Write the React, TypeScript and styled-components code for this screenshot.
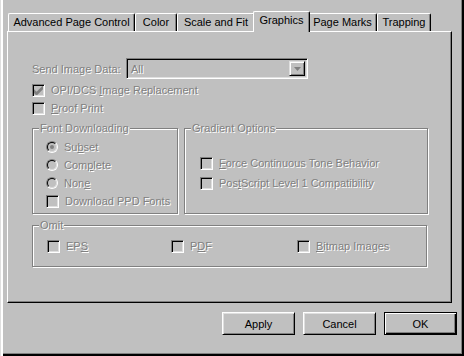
import React from 'react';
import styled, { createGlobalStyle } from 'styled-components';

const GlobalStyle = createGlobalStyle`
  html, body {
    margin: 0;
    padding: 0;
    background: #c0c0c0;
  }
  body {
    font-family: "Liberation Sans", Arial, sans-serif;
    font-size: 11px;
    color: #000;
  }
`;

const Window = styled.div`
  width: 464px;
  height: 356px;
  box-sizing: border-box;
  background: #c0c0c0;
  padding: 11px 0 0 7px;
  display: flex;
  flex-direction: column;
  box-shadow: inset 1px 0 #dfdfdf, inset 3px 0 #fff, inset -2px -2px #000, inset -3px -3px #808080;
`;

const TabStrip = styled.div`
  display: flex;
  align-items: flex-end;
  height: 20px;
  padding-left: 1px;
`;

const Tab = styled.div<{ $w: number; $active?: boolean }>`
  position: relative;
  box-sizing: border-box;
  width: ${(p) => p.$w + (p.$active ? 4 : 0)}px;
  height: ${(p) => (p.$active ? 21 : 18)}px;
  margin: ${(p) => (p.$active ? '0 -2px -1px' : '0')};
  z-index: ${(p) => (p.$active ? 2 : 1)};
  background: #c0c0c0;
  border-top: 1px solid #fff;
  border-left: 1px solid #fff;
  border-right: 1px solid #000;
  border-top-left-radius: 2px;
  border-top-right-radius: 2px;
  box-shadow: inset -1px 0 #808080;
  display: flex;
  justify-content: center;
  padding-top: ${(p) => (p.$active ? 2 : 2)}px;
  white-space: nowrap;
`;

const Panel = styled.div`
  position: relative;
  width: 445px;
  height: 272px;
  box-sizing: border-box;
  border-top: 1px solid #fff;
  border-left: 1px solid #fff;
  border-right: 1px solid #000;
  border-bottom: 1px solid #000;
  box-shadow: inset -1px -1px #808080;
  padding: 26px 0 0 24px;
  display: flex;
  flex-direction: column;
`;

const Dim = styled.span`
  color: #808080;
  text-shadow: 1px 1px 0 #fff;
  white-space: nowrap;
  u {
    text-decoration: underline;
    text-underline-offset: 1px;
  }
`;

const ComboRow = styled.div`
  display: flex;
  align-items: center;
  height: 21px;
`;

const ComboLabel = styled(Dim)`
  width: 94px;
`;

const Combo = styled.div`
  width: 182px;
  height: 21px;
  box-sizing: border-box;
  border-top: 1px solid #808080;
  border-left: 1px solid #808080;
  border-right: 1px solid #fff;
  border-bottom: 1px solid #fff;
  box-shadow: inset 1px 1px #000, inset -1px -1px #dfdfdf;
  display: flex;
  align-items: center;
  justify-content: space-between;
  padding: 0 2px 0 4px;
`;

const DropButton = styled.div`
  width: 16px;
  height: 15px;
  box-sizing: border-box;
  border-top: 1px solid #dfdfdf;
  border-left: 1px solid #dfdfdf;
  border-right: 1px solid #000;
  border-bottom: 1px solid #000;
  box-shadow: inset 1px 1px #fff, inset -1px -1px #808080;
  display: flex;
  align-items: center;
  justify-content: center;
`;

const Row = styled.label<{ $h?: number }>`
  display: flex;
  align-items: center;
  gap: 6px;
  height: ${(p) => p.$h ?? 18}px;
`;

const Box = styled.span`
  position: relative;
  width: 13px;
  height: 13px;
  box-sizing: border-box;
  flex: none;
  border-top: 1px solid #808080;
  border-left: 1px solid #808080;
  border-right: 1px solid #fff;
  border-bottom: 1px solid #fff;
  box-shadow: inset 1px 1px #000, inset -1px -1px #dfdfdf;
  background: #c0c0c0;
  display: flex;
  align-items: center;
  justify-content: center;
`;

const Radio = styled.span`
  position: relative;
  width: 12px;
  height: 12px;
  box-sizing: border-box;
  flex: none;
  border-radius: 50%;
  border: 1px solid;
  border-color: #808080 #fff #fff #808080;
  display: flex;
  align-items: center;
  justify-content: center;

  &::before {
    content: '';
    position: absolute;
    inset: 0;
    border-radius: 50%;
    border: 1px solid;
    border-color: #000 #dfdfdf #dfdfdf #000;
  }
`;

const Dot = styled.span`
  width: 4px;
  height: 4px;
  border-radius: 50%;
  background: #808080;
`;

const Options = styled.div`
  display: flex;
  flex-direction: column;
  margin-top: 2px;
`;

const Groups = styled.div`
  display: flex;
  gap: 6px;
  margin-top: 11px;
`;

const Group = styled.div<{ $w: number; $h: number }>`
  position: relative;
  width: ${(p) => p.$w}px;
  height: ${(p) => p.$h}px;
  box-sizing: border-box;
  border: 1px solid #808080;
  box-shadow: inset 1px 1px #fff, 1px 1px #fff;
`;

const Legend = styled(Dim)`
  position: absolute;
  top: -7px;
  left: 6px;
  padding: 0 1px;
  background: #c0c0c0;
  line-height: 13px;
`;

const GroupBody = styled.div<{ $pt: number; $pl: number; $row?: boolean }>`
  display: flex;
  flex-direction: ${(p) => (p.$row ? 'row' : 'column')};
  padding: ${(p) => p.$pt}px 0 0 ${(p) => p.$pl}px;
`;

const OmitCell = styled.div<{ $w: number }>`
  width: ${(p) => p.$w}px;
`;

const OmitGroup = styled(Group)`
  margin-top: 11px;
`;

const ButtonRow = styled.div`
  display: flex;
  justify-content: flex-end;
  gap: 8px;
  margin-top: 9px;
  padding-right: 7px;
`;

const Button = styled.button<{ $default?: boolean }>`
  width: 73px;
  height: 23px;
  box-sizing: border-box;
  font: inherit;
  color: #000;
  background: #c0c0c0;
  padding: 0;
  border: 1px solid #000;
  border-top-color: ${(p) => (p.$default ? '#000' : '#fff')};
  border-left-color: ${(p) => (p.$default ? '#000' : '#fff')};
  box-shadow: ${(p) =>
    p.$default
      ? 'inset 1px 1px #fff, inset -1px -1px #000, inset -2px -2px #808080'
      : 'inset 1px 1px #dfdfdf, inset -1px -1px #808080'};
  cursor: default;
`;

const Check = () => (
  <svg width="9" height="9" viewBox="0 0 7 7" style={{ marginLeft: 0 }}>
    <path d="M0 2v3l2 2 5-5V-1L2 4z" fill="#808080" transform="translate(0 0.5)" />
  </svg>
);

const CheckRow = ({ label, checked, h }: { label: React.ReactNode; checked?: boolean; h?: number }) => (
  <Row $h={h}>
    <Box>{checked && <Check />}</Box>
    <Dim>{label}</Dim>
  </Row>
);

const RadioRow = ({ label, on }: { label: React.ReactNode; on?: boolean }) => (
  <Row>
    <Radio>{on && <Dot />}</Radio>
    <Dim>{label}</Dim>
  </Row>
);

const tabs = [
  { label: 'Advanced Page Control', w: 127 },
  { label: 'Color', w: 42 },
  { label: 'Scale and Fit', w: 78 },
  { label: 'Graphics', w: 53, active: true },
  { label: 'Page Marks', w: 69 },
  { label: 'Trapping', w: 54 },
];

export default function App() {
  return (
    <>
      <GlobalStyle />
      <Window>
        <TabStrip>
          {tabs.map((t) => (
            <Tab key={t.label} $w={t.w} $active={t.active}>
              {t.label}
            </Tab>
          ))}
        </TabStrip>
        <Panel>
          <ComboRow>
            <ComboLabel>Send Image Data:</ComboLabel>
            <Combo>
              <Dim>All</Dim>
              <DropButton>
                <svg width="7" height="4" viewBox="0 0 7 4">
                  <path d="M0 0h7L3.5 4z" fill="#808080" />
                </svg>
              </DropButton>
            </Combo>
          </ComboRow>
          <Options>
            <CheckRow
              checked
              label={
                <>
                  OPI/DCS <u>I</u>mage Replacement
                </>
              }
            />
            <CheckRow
              label={
                <>
                  <u>P</u>roof Print
                </>
              }
            />
          </Options>
          <Groups>
            <Group $w={146} $h={86}>
              <Legend>Font Downloading</Legend>
              <GroupBody $pt={9} $pl={13}>
                <RadioRow
                  on
                  label={
                    <>
                      Su<u>b</u>set
                    </>
                  }
                />
                <RadioRow
                  label={
                    <>
                      Com<u>p</u>lete
                    </>
                  }
                />
                <RadioRow
                  label={
                    <>
                      Non<u>e</u>
                    </>
                  }
                />
                <CheckRow label="Download PPD Fonts" />
              </GroupBody>
            </Group>
            <Group $w={244} $h={86}>
              <Legend>Gradient Options</Legend>
              <GroupBody $pt={24} $pl={15}>
                <CheckRow
                  h={20}
                  label={
                    <>
                      <u>F</u>orce Continuous Tone Behavior
                    </>
                  }
                />
                <CheckRow
                  h={20}
                  label={
                    <>
                      Pos<u>t</u>Script Level 1 Compatibility
                    </>
                  }
                />
              </GroupBody>
            </Group>
          </Groups>
          <OmitGroup $w={395} $h={42}>
            <Legend>Omit</Legend>
            <GroupBody $pt={11} $pl={14} $row>
              <OmitCell $w={124}>
                <CheckRow
                  label={
                    <>
                      EP<u>S</u>
                    </>
                  }
                />
              </OmitCell>
              <OmitCell $w={126}>
                <CheckRow
                  label={
                    <>
                      P<u>D</u>F
                    </>
                  }
                />
              </OmitCell>
              <OmitCell $w={120}>
                <CheckRow
                  label={
                    <>
                      <u>B</u>itmap Images
                    </>
                  }
                />
              </OmitCell>
            </GroupBody>
          </OmitGroup>
        </Panel>
        <ButtonRow>
          <Button>Apply</Button>
          <Button>Cancel</Button>
          <Button $default>OK</Button>
        </ButtonRow>
      </Window>
    </>
  );
}
